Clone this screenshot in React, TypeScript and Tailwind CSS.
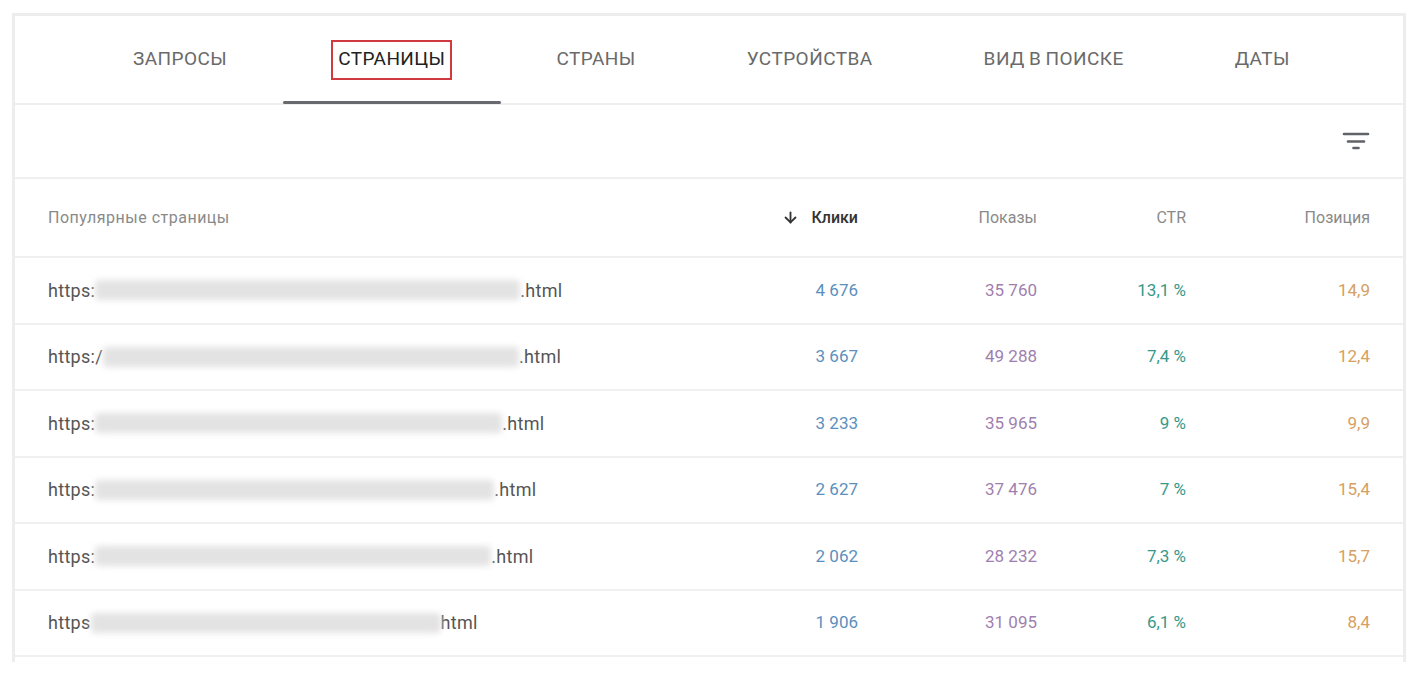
import { ArrowDown } from "lucide-react";

const tabs = ["ЗАПРОСЫ", "СТРАНИЦЫ", "СТРАНЫ", "УСТРОЙСТВА", "ВИД В ПОИСКЕ", "ДАТЫ"];

const rows = [
  { pre: "https:", blur: 425, post: ".html", clicks: "4 676", shows: "35 760", ctr: "13,1 %", pos: "14,9" },
  { pre: "https:/", blur: 416, post: ".html", clicks: "3 667", shows: "49 288", ctr: "7,4 %", pos: "12,4" },
  { pre: "https:", blur: 407, post: ".html", clicks: "3 233", shows: "35 965", ctr: "9 %", pos: "9,9" },
  { pre: "https:", blur: 399, post: ".html", clicks: "2 627", shows: "37 476", ctr: "7 %", pos: "15,4" },
  { pre: "https:", blur: 396, post: ".html", clicks: "2 062", shows: "28 232", ctr: "7,3 %", pos: "15,7" },
  { pre: "https", blur: 350, post: "html", clicks: "1 906", shows: "31 095", ctr: "6,1 %", pos: "8,4" },
];

const grid = "grid grid-cols-[1fr_150px_179px_149px_184px] items-center pl-[33px] pr-[33px]";

function FilterIcon() {
  return (
    <svg width="28" height="22" viewBox="0 0 28 22" fill="none" stroke="#5f6368" strokeWidth="2.6" strokeLinecap="round">
      <path d="M2 4h24" />
      <path d="M6 11.5h16" />
      <path d="M11.5 18h5" />
    </svg>
  );
}

export default function App() {
  return (
    <div className="w-full h-[678px] bg-white pt-[13px] px-[12px] font-['Roboto','Liberation_Sans',sans-serif]">
      <div className="h-[649px] border-x-[3px] border-t-[3px] border-[#ededed]">
        {/* Tabs */}
        <div className="h-[89px] flex pl-[62.5px] border-b-2 border-[#efefef]">
          {tabs.map((tab, i) =>
            i === 1 ? (
              <div key={tab} className="relative h-full flex items-center px-[48.5px]">
                <span className="border-2 border-[#cf3a3f] px-[5px] h-[40px] flex items-center text-[19px] text-[#222] tracking-[0.4px]">
                  {tab}
                </span>
                <span className="absolute left-0 right-0 bottom-[-1px] h-[3px] bg-[#66696d] rounded-full" />
              </div>
            ) : (
              <div key={tab} className="h-full flex items-center px-[55.5px] text-[19px] text-[#6a6a6a] tracking-[0.45px] [word-spacing:-1px]">
                {tab}
              </div>
            )
          )}
        </div>

        {/* Filter row */}
        <div className="h-[74px] flex items-center justify-end pr-[33px] border-b-2 border-[#efefef]">
          <FilterIcon />
        </div>

        {/* Header */}
        <div className={`${grid} h-[79px] border-b-2 border-[#efefef] text-[16px] text-[#8a8a8a]`}>
          <div className="tracking-[0.5px]">Популярные страницы</div>
          <div className="flex items-center justify-end gap-[12px] text-[#333] font-medium">
            <ArrowDown size={17} strokeWidth={2.6} className="text-[#333]" />
            Клики
          </div>
          <div className="text-right">Показы</div>
          <div className="text-right">CTR</div>
          <div className="text-right">Позиция</div>
        </div>

        {/* Rows */}
        {rows.map((r) => (
          <div key={r.clicks} className={`${grid} h-[66.5px] border-b-2 border-[#f0f0f0] text-[17px]`}>
            <div className="flex items-center text-[#555] text-[18px] tracking-[0.3px]">
              <span>{r.pre}</span>
              <span className="h-[20px] bg-[#e3e3e3] blur-[3px] rounded-sm" style={{ width: r.blur }} />
              <span>{r.post}</span>
            </div>
            <div className="text-right text-[#5b8fbd]">{r.clicks}</div>
            <div className="text-right text-[#a07fb0]">{r.shows}</div>
            <div className="text-right text-[#36998a]">{r.ctr}</div>
            <div className="text-right text-[#d6a062]">{r.pos}</div>
          </div>
        ))}
      </div>
    </div>
  );
}
